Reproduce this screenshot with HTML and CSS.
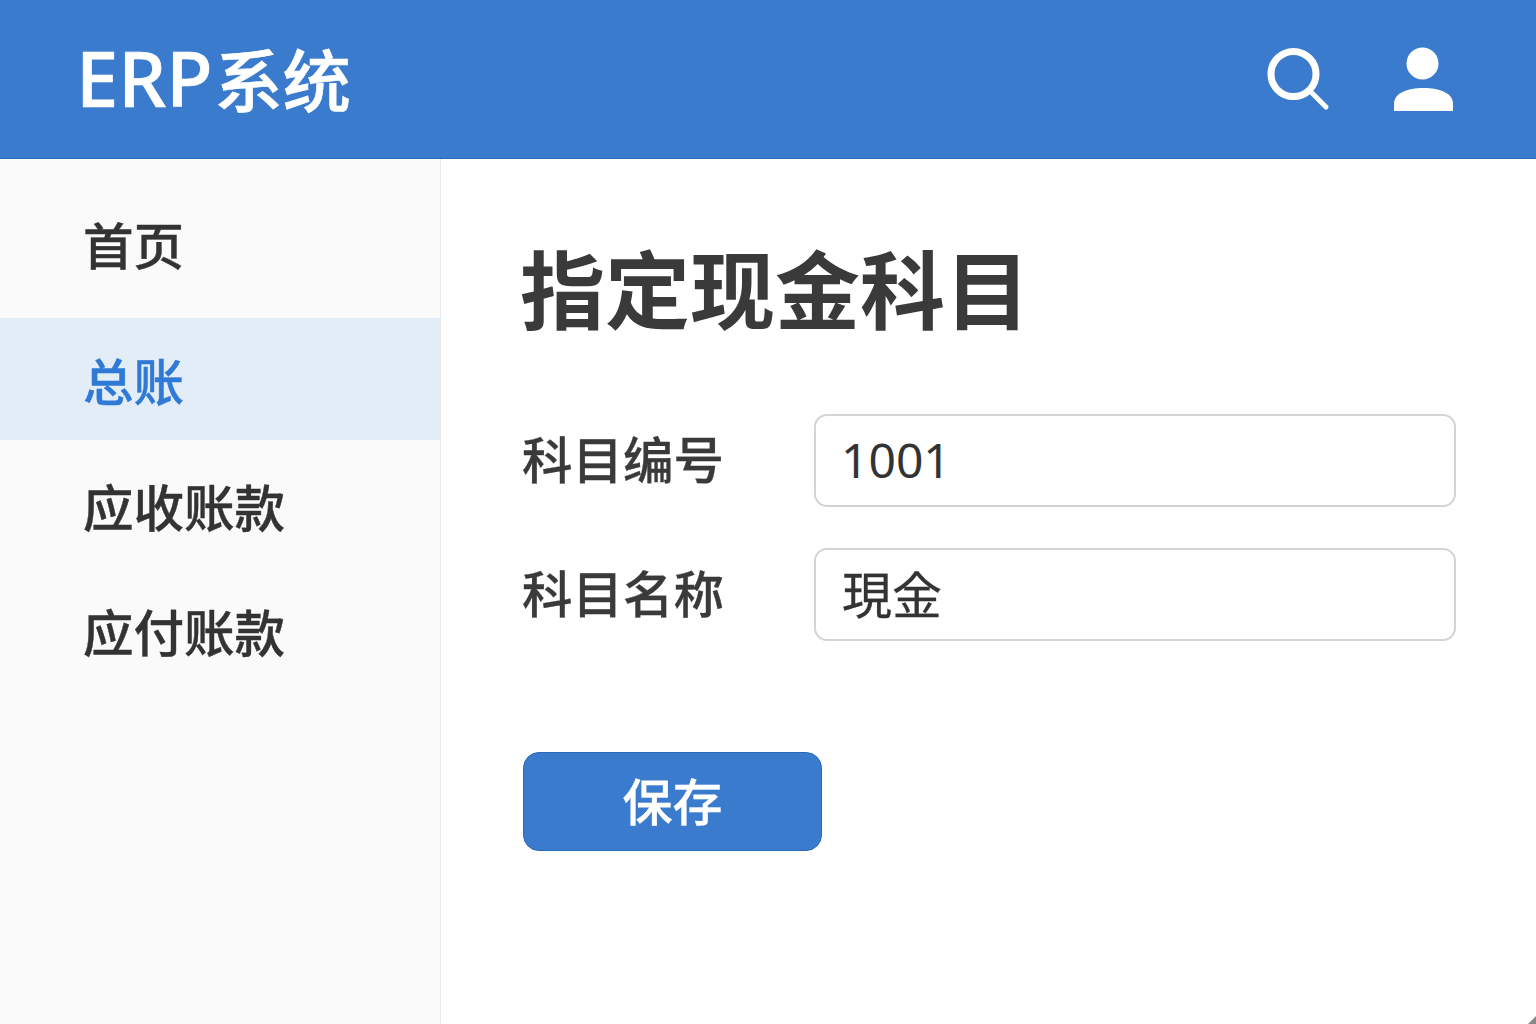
FILE: index.html
```html
<!DOCTYPE html>
<html lang="zh-CN">
<head>
<meta charset="utf-8">
<title>ERP系统</title>
<link rel="stylesheet" href="styles.css">
</head>
<body>
<div class="app">
  <header class="topbar">
    <div class="brand"><span class="brand-latin">ERP</span>系统</div>
    <div class="top-icons">
      <svg class="icon-search" width="64" height="64" viewBox="0 0 64 64" aria-hidden="true">
        <circle cx="27.500" cy="27" r="22.500" fill="none" stroke="#fff" stroke-width="7"/>
        <path d="M44 44 L60 60" fill="none" stroke="#fff" stroke-width="5" stroke-linecap="round"/>
      </svg>
      <svg class="icon-user" width="60" height="64" viewBox="0 0 60 64" aria-hidden="true">
        <circle cx="28.500" cy="16.500" r="16" fill="#fff"/>
        <path d="M0 64 V57 C0 46 13 41 29.500 41 C46 41 59 46 59 57 V64 Z" fill="#fff"/>
      </svg>
    </div>
  </header>
  <div class="body-row">
    <nav class="sidebar">
      <a class="nav-item nav-home">首页</a>
      <a class="nav-item nav-active">总账</a>
      <a class="nav-item">应收账款</a>
      <a class="nav-item">应付账款</a>
    </nav>
    <main class="content">
      <h1 class="title">指定现金科目</h1>
      <div class="form">
        <div class="field">
          <span class="label">科目编号</span>
          <div class="input input-num">1001</div>
        </div>
        <div class="field">
          <span class="label">科目名称</span>
          <div class="input" lang="ja">現金</div>
        </div>
      </div>
      <button class="save" type="button">保存</button>
    </main>
  </div>
  <div class="corner"></div>
</div>
</body>
</html>
```

FILE: styles.css
```css
* { box-sizing: border-box; }
html, body { margin: 0; padding: 0; }
body {
  width: 1536px;
  height: 1024px;
  overflow: hidden;
  background: #fff;
  font-family: "Noto Sans CJK SC", "Noto Sans", sans-serif;
  color: #333;
}
.app {
  position: relative;
  width: 1536px;
  height: 1024px;
  display: flex;
  flex-direction: column;
}
.topbar {
  height: 159px;
  flex: none;
  background: #3a7bce;
  border-bottom: 1px solid #2a68b8;
  display: flex;
  align-items: center;
  justify-content: space-between;
  padding: 0 82px 0 76px;
}
.brand {
  font-size: 68px;
  font-weight: 500;
  color: #fff;
  line-height: 1;
  padding-bottom: 3px;
  white-space: nowrap;
  -webkit-text-stroke: 0.7px #fff;
}
.brand-latin {
  font-family: "Noto Sans", sans-serif;
  font-size: 76px;
  margin-right: 2px;
}
.top-icons {
  display: flex;
  align-items: center;
  gap: 64px;
}
.body-row {
  flex: 1;
  display: flex;
  min-height: 0;
}
.sidebar {
  width: 441px;
  flex: none;
  background: #fafafa;
  border-right: 1px solid #e8e8e8;
  display: flex;
  flex-direction: column;
  padding-top: 27px;
}
.nav-item {
  height: 125px;
  display: flex;
  align-items: center;
  padding: 0 0 8px 83px;
  font-size: 50.500px;
  font-weight: 500;
  color: #333;
  -webkit-text-stroke: 0.4px currentColor;
}
.nav-home { height: 122px; margin-bottom: 10px; }
.nav-active {
  height: 122px;
  margin-bottom: 6px;
  padding-bottom: 0;
  background: #e3edf8;
  color: #2f7ad6;
}
.content {
  flex: 1;
  padding: 72px 80px 0 81px;
}
.title {
  margin: 0 0 0 -2px;
  font-size: 85px;
  font-weight: 700;
  line-height: 110px;
  color: #3a3a3a;
}
.form {
  margin-top: 73px;
  display: flex;
  flex-direction: column;
  gap: 41px;
}
.field {
  display: flex;
  align-items: center;
}
.label {
  width: 292px;
  flex: none;
  font-size: 50.500px;
  font-weight: 500;
  color: #3a3a3a;
  padding-bottom: 8px;
  -webkit-text-stroke: 0.3px currentColor;
}
.input {
  flex: 1;
  height: 93px;
  display: flex;
  align-items: center;
  padding: 0 0 6px 26px;
  border: 2px solid #d4d4d4;
  border-radius: 13px;
  background: #fff;
  font-size: 50px;
  color: #333;
  -webkit-text-stroke: 0.3px currentColor;
}
.input-num {
  font-family: "Noto Sans", sans-serif;
  font-size: 48px;
  padding: 0 0 3px 25px;
  -webkit-text-stroke: 0;
}
.save {
  display: flex;
  align-items: center;
  justify-content: center;
  margin: 111px 0 0 1px;
  width: 299px;
  height: 99px;
  padding: 0 0 6px;
  background: #3a7bce;
  border: 1px solid #2a68b8;
  border-radius: 16px;
  color: #fff;
  font-family: inherit;
  font-size: 50px;
  font-weight: 500;
  -webkit-text-stroke: 0.3px #fff;
}
.corner {
  position: absolute;
  right: 0;
  bottom: 0;
  width: 0;
  height: 0;
  border-style: solid;
  border-width: 0 0 8px 8px;
  border-color: transparent transparent #888 transparent;
}
```
